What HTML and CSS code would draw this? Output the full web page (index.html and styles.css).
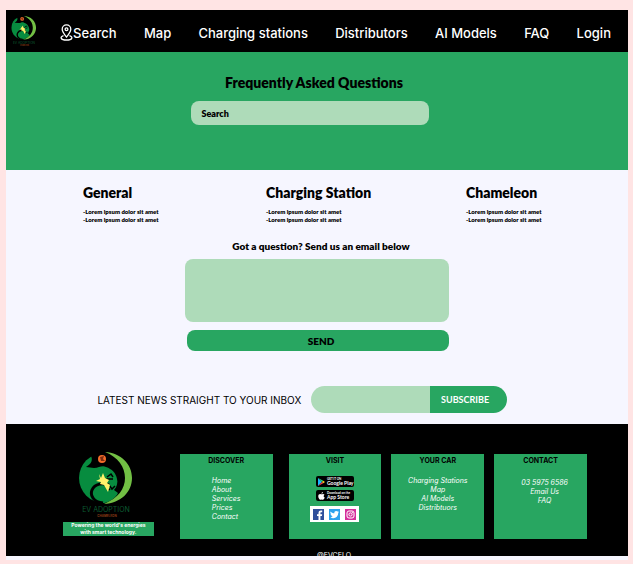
FILE: index.html
```html
<!DOCTYPE html>
<html lang="en">
<head>
<meta charset="utf-8">
<meta name="viewport" content="width=device-width, initial-scale=1">
<title>EV Adoption Chameleon - FAQ</title>
<link rel="stylesheet" href="styles.css">
</head>
<body>
<svg width="0" height="0" class="sprite" aria-hidden="true">
  <symbol id="mark" viewBox="0 0 56 52">
    <circle cx="26" cy="26" r="25" fill="#078c3f"/>
    <path d="M12 2L20 0H34L52 10V44L34 52H24C31 50 38 46 40 41L36 38C39 35 40 30 39 27C38 21 34 17 28 15C24 13 21 16 16 16L8 15C13 12 16 8 12 2Z" fill="#000"/>
    <path d="M25 51C15 50 12 43 14 38C17 31 25 31 31 33" fill="none" stroke="#000" stroke-width="3"/>
    <path d="M29 25L33 22L35 25M28 27H35M31 33L34 37L37 34M29 35L32 38" fill="none" stroke="#000" stroke-width="1.500"/>
    <path d="M27 0C43 1 54 12 54 26S43 51 26 52C40 46 47 37 47 26S40 5 27 0Z" fill="#72bf44"/>
    <circle cx="24" cy="7" r="4" fill="#f26c2a"/>
    <path d="M22 5L26 4L25 7L27 9L23 9Z" fill="#7b2c12"/>
    <path d="M21 22L23 26L25 21L27 26L31 28L29 31L32 33L30 40L26 33L22 32L23 30L18 29L22 27Z" fill="#fff26a"/>
  </symbol>
</svg>
<div class="page">
  <header class="topbar">
    <a href="#" class="home" aria-label="Home"><svg class="logo-small" viewBox="0 0 56 66"><use href="#mark" width="56" height="52"/><text x="28" y="60" class="logo-name">EV ADOPTION</text><text x="29" y="65" class="logo-sub">CHAMELEON</text></svg></a>
    <nav class="nav" aria-label="Main">
      <a href="#" class="nav-search"><svg class="pin" viewBox="0 0 13 17" fill="none" stroke="#fff" stroke-width="1.3" aria-hidden="true"><path d="M6.500 13C4.500 10.500 2.200 7.800 2.200 5.200A4.300 4.300 0 0 1 10.800 5.200C10.800 7.800 8.500 10.500 6.500 13Z"/><circle cx="6.500" cy="5.200" r="1.400"/><path d="M3.500 11.600C-.5 13 .5 16 6.500 16S13.500 13 9.500 11.600"/></svg>Search</a>
      <a href="#">Map</a>
      <a href="#">Charging stations</a>
      <a href="#">Distributors</a>
      <a href="#">AI Models</a>
      <a href="#">FAQ</a>
      <a href="#">Login</a>
    </nav>
  </header>
  <main>
    <section class="hero">
      <h1>Frequently Asked Questions</h1>
      <input class="search" type="search" placeholder="Search" aria-label="Search">
    </section>
    <section class="topics">
      <div><h2>General</h2><p>-Lorem ipsum dolor sit amet</p><p>-Lorem ipsum dolor sit amet</p></div>
      <div><h2>Charging Station</h2><p>-Lorem ipsum dolor sit amet</p><p>-Lorem ipsum dolor sit amet</p></div>
      <div><h2>Chameleon</h2><p>-Lorem ipsum dolor sit amet</p><p>-Lorem ipsum dolor sit amet</p></div>
    </section>
    <form class="question">
      <label for="message">Got a question? Send us an email below</label>
      <textarea id="message"></textarea>
      <button type="button">SEND</button>
    </form>
    <form class="newsletter">
      <label for="email">LATEST NEWS STRAIGHT TO YOUR INBOX</label>
      <div class="subscribe">
        <input id="email" type="email">
        <button type="button">SUBSCRIBE</button>
      </div>
    </form>
  </main>
  <footer class="footer">
    <div class="columns">
      <div class="brand">
        <svg class="logo-large" viewBox="0 0 56 66" role="img" aria-label="EV Adoption Chameleon"><use href="#mark" width="56" height="52"/><text x="28" y="60" class="logo-name">EV ADOPTION</text><text x="29" y="65" class="logo-sub">CHAMELEON</text></svg>
        <p>Powering the world's energies with smart technology.</p>
      </div>
      <section class="card discover">
        <h3>DISCOVER</h3>
        <ul><li><a href="#">Home</a></li><li><a href="#">About</a></li><li><a href="#">Services</a></li><li><a href="#">Prices</a></li><li><a href="#">Contact</a></li></ul>
      </section>
      <section class="card visit">
        <h3>VISIT</h3>
        <a href="#" class="store">
          <svg viewBox="0 0 8 9" aria-hidden="true"><path d="M0 0L4.500 4.500L0 9Z" fill="#19b5fe"/><path d="M0 0L6 3.200L4.500 4.500Z" fill="#20d47b"/><path d="M0 9L6 5.800L4.500 4.500Z" fill="#f43b47"/><path d="M6 3.200L8 4.500L6 5.800L4.500 4.500Z" fill="#ffc91f"/></svg>
          <span><small>GET IT ON</small>Google Play</span>
        </a>
        <a href="#" class="store">
          <svg viewBox="0 0 8 9" fill="#fff" aria-hidden="true"><path d="M5.700 0C5.800 1.200 4.900 2 4 2C3.900 1 4.800.1 5.700 0ZM4.100 2.500C4.600 2.500 5 2.100 5.800 2.100C6.500 2.100 7 2.500 7.400 3C6 3.900 6.200 5.700 7.700 6.300C7.300 7.500 6.500 8.800 5.600 8.800C5 8.800 4.800 8.500 4.200 8.500S3.300 8.800 2.800 8.800C1.500 8.800.3 6.600.3 4.800C.3 3.100 1.300 2.100 2.500 2.100C3.200 2.100 3.700 2.500 4.100 2.500Z"/></svg>
          <span><small>Download on the</small>App Store</span>
        </a>
        <div class="social">
          <a href="#" aria-label="Facebook"><svg viewBox="0 0 11 11"><path fill="#2f4f9b" d="M0 0H11V11H0Z"/><path fill="#fff" d="M5.500 11V7H4V5.200H5.500V4C5.500 2.300 6.500 1.500 8 1.500H9.200V3.200H8.300C7.600 3.200 7.400 3.500 7.400 4V5.200H9.200L8.900 7H7.400V11Z"/></svg></a>
          <a href="#" aria-label="Twitter"><svg viewBox="0 0 11 11"><path fill="#2ea3ee" d="M0 0H11V11H0Z"/><path fill="#fff" d="M1.400 2.400C2.500 3.600 3.800 4.200 5.400 4.300C5.100 2.800 6.100 2 7.200 2C7.700 2 8.200 2.200 8.500 2.500L9.700 2.100L9.100 3.100L10 2.900L9.200 3.800C9.300 7 7 9.200 4.300 9.200C3.200 9.200 2.200 8.900 1.300 8.300C2.300 8.400 3.200 8.100 3.900 7.600C3 7.500 2.400 7 2.200 6.300H3C2 6 1.500 5.300 1.500 4.400L2.300 4.600C1.400 4 1.100 3.100 1.400 2.400Z"/></svg></a>
          <a href="#" aria-label="Instagram"><svg viewBox="0 0 11 11" fill="none" stroke="#fff"><path fill="#d52f9b" stroke="none" d="M0 0H11V11H0Z"/><rect x="2" y="2" width="7" height="7" rx="2"/><circle cx="5.500" cy="5.500" r="1.600"/><path d="M7.200 3.500H8"/></svg></a>
        </div>
      </section>
      <section class="card">
        <h3>YOUR CAR</h3>
        <ul><li><a href="#">Charging Stations</a></li><li><a href="#">Map</a></li><li><a href="#">AI Models</a></li><li><a href="#">Distribtuors</a></li></ul>
      </section>
      <section class="card contact">
        <h3>CONTACT</h3>
        <ul><li><a href="#">03 5975 6586</a></li><li><a href="#">Email Us</a></li><li><a href="#">FAQ</a></li></ul>
      </section>
    </div>
    <p class="handle">@EVCELO</p>
  </footer>
</div>
</body>
</html>
```
FILE: styles.css
```css
* { box-sizing: border-box; margin: 0; }
body {
  background: #ffe4e4;
  color: #000;
  font-family: Inter, "Liberation Sans", sans-serif;
}
a { color: inherit; text-decoration: none; }
button, input, textarea { border: 0; font: inherit; color: inherit; }
.sprite { position: absolute; }
.page { margin: 10px 5px 5px 6px; padding-bottom: 4px; background: #f6f6ff; }

.topbar { display: flex; align-items: center; height: 42px; padding: 0 17px 0 5px; background: #000; }
.home { display: flex; }
.logo-small { width: 26px; height: 32px; }
.nav { flex: 1; display: flex; justify-content: space-between; padding: 4px 0 0 23px; color: #fff; font-size: 13px; font-weight: 500; line-height: 18px; white-space: nowrap; }
.nav-search { display: flex; }
.pin { width: 13px; height: 17px; }
.logo-name { fill: #0b5a31; font: 7px Inter, sans-serif; text-anchor: middle; }
.logo-sub { fill: #8a3b16; font: bold 3px Inter, sans-serif; text-anchor: middle; }

.hero { display: flex; flex-direction: column; align-items: center; min-height: 118px; padding: 21px 14px 0 0; background: #28a661; }
h1, h2, .topics p, .question, .search { font-family: Lato, sans-serif; font-weight: 800; }
h1 { padding-left: 8px; font-size: 14px; line-height: 20px; }
.search { width: 39%; height: 24px; margin-top: 8px; padding: 0 10px; border-radius: 8px; background: #aedbb9; font-size: 9px; outline-offset: 1px; }
.search::placeholder { color: #000; opacity: 1; }

.topics { display: grid; grid-template-columns: 183fr 200fr 162fr; padding: 14px 0 0 77px; }
h2 { margin-bottom: 6px; font-size: 14px; line-height: 18px; }
.topics p { font-size: 6px; line-height: 8px; }

.question { display: flex; flex-direction: column; width: 43%; margin: 14px auto 0; padding: 0 2px; }
.question label { padding-left: 8px; font-size: 10px; line-height: 16px; text-align: center; }
.question textarea { height: 63px; margin-top: 5px; padding: 8px; border-radius: 8px; background: #aedbb9; resize: none; }
.question button { height: 21px; margin: 8px 0 0 2px; padding: 0 0 0 6px; border-radius: 8px; background: #28a661; font-size: 10px; }

.newsletter { display: flex; justify-content: center; align-items: center; gap: 10px; padding: 35px 30px 11px 0; }
.newsletter label { font-size: 10px; line-height: 16px; }
.subscribe { display: flex; width: 33%; height: 27px; border-radius: 14px; overflow: hidden; }
.subscribe input { flex: 93; min-width: 0; padding: 0 12px; background: #aedbb9; font-size: 10px; }
.subscribe button { flex: 70; padding: 0 6px 0 0; background: #28a661; color: #fff; font-family: Lato, sans-serif; font-size: 9px; font-weight: 700; }

.footer { padding-top: 28px; background: #000; }
.columns { display: flex; gap: 10px; padding: 0 41px 0 57px; }
.brand { flex: 91; display: flex; flex-direction: column; align-items: center; margin-right: 16px; }
.logo-large { width: 56px; height: 66px; margin-right: 4px; }
.brand p { align-self: stretch; margin-top: 4px; padding: 0 6px; background: #28a661; color: #fff; font-size: 5px; font-weight: 700; line-height: 7px; text-align: center; }
.card { flex: 93; min-width: 0; min-height: 85px; margin-top: 2px; background: #28a661; text-align: center; }
.discover { margin-right: 6px; }
h3 { margin-bottom: 8px; font-size: 7px; font-weight: 700; line-height: 14px; }
.card ul { padding: 0; list-style: none; color: #fff; font-size: 7px; font-style: italic; line-height: 9px; }
.card li { height: 9px; }
.discover ul { padding-left: 32px; text-align: left; }
.contact ul { padding: 2px 0 0 8px; }
.visit { display: flex; flex-direction: column; align-items: center; }
.store { display: flex; align-items: center; gap: 2px; width: 38px; height: 11px; margin-bottom: 3px; padding-left: 2px; border-radius: 2px; background: #000; color: #fff; font: 700 5px/5px Lato, sans-serif; text-align: left; white-space: nowrap; }
.store svg { flex: none; width: 7px; height: 8px; }
.store small { display: block; font-size: 3px; line-height: 3px; }
.social { display: flex; justify-content: center; align-items: center; gap: 5px; width: 49px; height: 16px; margin-top: 2px; background: #fff; }
.social a { display: flex; }
.social svg { width: 11px; height: 11px; }
.handle { height: 5px; margin-top: 12px; padding-left: 34px; overflow: hidden; color: #fff; font-size: 7px; line-height: 9px; text-align: center; }
```
